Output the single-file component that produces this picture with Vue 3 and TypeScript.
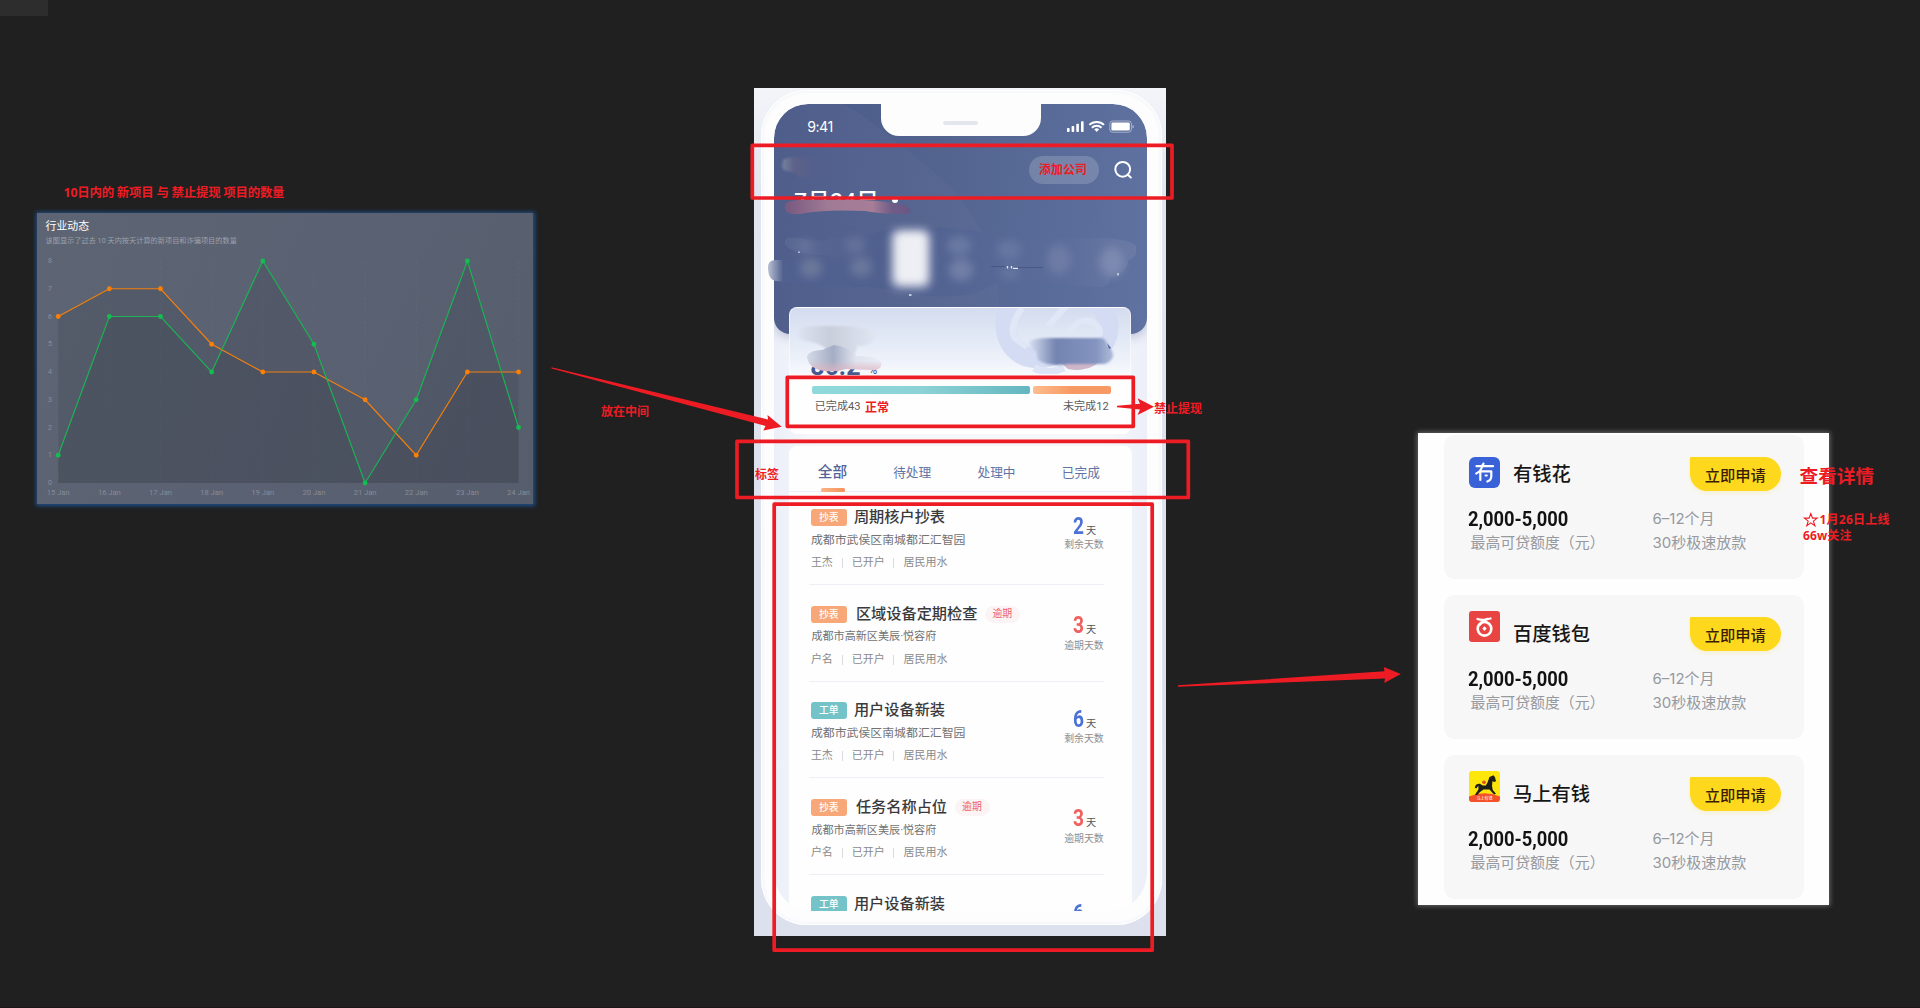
<script setup lang="ts">
interface Task {
  tag: string
  kind: 'read' | 'order'
  title: string
  overdue: boolean
  address: string
  owner: string
  days: number
}

interface Loan {
  name: string
  logo: 'flower' | 'wallet' | 'horse'
}

interface Note {
  text: string
  x: number
  y: number
  size: number
  width: number
}

const days = ['15', '16', '17', '18', '19', '20', '21', '22', '23', '24']
const orange = [6, 7, 7, 5, 4, 4, 3, 1, 4, 4]
const green = [1, 6, 6, 4, 8, 5, 0, 3, 8, 2]
const px = (i: number) => 21.2 + i * 51.15
const py = (v: number) => 270 - v * 27.75
const points = (s: number[]) => s.map((v, i) => `${px(i)},${py(v)}`).join(' ')
const area = (s: number[]) => `${px(0)},${py(0)} ${points(s)} ${px(9)},${py(0)}`

const tabs = ['全部', '待处理', '处理中', '已完成']

const tasks: Task[] = [
  { tag: '抄表', kind: 'read', title: '周期核户抄表', overdue: false, address: '成都市武侯区南城都汇汇智园', owner: '王杰', days: 2 },
  { tag: '抄表', kind: 'read', title: '区域设备定期检查', overdue: true, address: '成都市高新区美辰·悦容府', owner: '户名', days: 3 },
  { tag: '工单', kind: 'order', title: '用户设备新装', overdue: false, address: '成都市武侯区南城都汇汇智园', owner: '王杰', days: 6 },
  { tag: '抄表', kind: 'read', title: '任务名称占位', overdue: true, address: '成都市高新区美辰·悦容府', owner: '户名', days: 3 },
  { tag: '工单', kind: 'order', title: '用户设备新装', overdue: false, address: '成都市武侯区南城都汇汇智园', owner: '王杰', days: 6 },
]

const loans: Loan[] = [
  { name: '有钱花', logo: 'flower' },
  { name: '百度钱包', logo: 'wallet' },
  { name: '马上有钱', logo: 'horse' },
]

const notes: Note[] = [
  { text: '10日内的 新项目 与 禁止提现 项目的数量', x: 63.5, y: 197.3, size: 12.4, width: 221 },
  { text: '放在中间', x: 601, y: 415.6, size: 12, width: 48 },
  { text: '添加公司', x: 1039, y: 173.6, size: 12, width: 48 },
  { text: '正常', x: 865, y: 411.7, size: 12, width: 24 },
  { text: '禁止提现', x: 1154, y: 412.6, size: 12, width: 48 },
  { text: '标签', x: 755, y: 478.6, size: 12, width: 24 },
  { text: '查看详情', x: 1799.5, y: 483.4, size: 18.6, width: 74.5 },
  { text: '1月26日上线', x: 1819.5, y: 524.2, size: 12, width: 70 },
  { text: '66w关注', x: 1803, y: 540, size: 12, width: 48.5 },
]
</script>

<template>
  <main class="board">
    <div class="stub"></div>

    <section class="chart">
      <h2>行业动态</h2>
      <p>该图显示了过去 10 天内按天计算的新项目和诈骗项目的数量</p>
      <svg class="plot" viewBox="0 0 496 291">
        <line v-for="(d, i) in days" :key="d" :x1="px(i)" y1="48" :x2="px(i)" y2="270" class="grid" />
        <polygon :points="area(orange)" class="area" />
        <polygon :points="area(green)" class="area" />
        <text v-for="v in 9" :key="v" x="13" :y="py(v - 1) + 2" class="tick">{{ v - 1 }}</text>
        <text v-for="(d, i) in days" :key="'x' + d" :x="px(i)" y="281.5" class="tick">{{ d }} Jan</text>
        <polyline :points="points(orange)" class="line" stroke="#f57f0c" />
        <polyline :points="points(green)" class="line" stroke="#1bb354" />
        <circle v-for="(v, i) in orange" :key="'o' + i" :cx="px(i)" :cy="py(v)" r="2.4" fill="#fb8005" />
        <circle v-for="(v, i) in green" :key="'g' + i" :cx="px(i)" :cy="py(v)" r="2.4" fill="#14bd50" />
      </svg>
    </section>

    <section class="mock">
      <div class="device">
        <div class="screen">
          <header class="top">
            <i class="sweep"></i>
            <div class="status">
              <span>9:41</span>
              <svg viewBox="0 0 68 13" width="68" height="13">
                <g fill="#fff">
                  <rect x="1" y="8" width="2.6" height="4" rx=".7" />
                  <rect x="5.6" y="6" width="2.6" height="6" rx=".7" />
                  <rect x="10.3" y="3.8" width="2.6" height="8.2" rx=".7" />
                  <rect x="15" y="1.2" width="2.6" height="10.8" rx=".7" />
                  <rect x="45.4" y="2.6" width="18.4" height="8" rx="1.4" />
                  <path d="M28.3 9.2a3.7 3.7 0 0 1 4.8 0l-2.4 2.8z" />
                </g>
                <g fill="none" stroke="#fff" stroke-width="2">
                  <path d="M23.4 4.9a10.4 10.4 0 0 1 14.6 0M25.9 7.700a6.9 6.9 0 0 1 9.6 0" />
                </g>
                <rect x="43.8" y="1" width="21.6" height="11.2" rx="2.8" fill="none" stroke="#fff" stroke-opacity=".45" />
                <path d="M66.5 5v3.4q1.4-.4 1.4-1.7t-1.4-1.7z" fill="#fff" fill-opacity=".5" />
              </svg>
            </div>
            <div class="toolbar">
              <div class="pill"></div>
              <svg viewBox="0 0 20 20" width="20" height="20">
                <circle cx="9.7" cy="9.3" r="7.4" fill="none" stroke="#fff" stroke-width="2" />
                <path d="M14.6 14.6l3.2 3" stroke="#fff" stroke-width="2" stroke-linecap="round" />
              </svg>
            </div>
            <div class="date">7月24日</div>
            <i class="dot"></i>
          </header>
          <div class="notch"><i></i></div>

          <article class="rate">
            <svg class="mark" viewBox="0 0 140 66" width="140" height="66">
              <g fill="none" stroke-linecap="butt">
                <path d="M26 -8a30 33 0 0 0 18 58q20 2 36-14" stroke="#d3dcf3" stroke-width="20" />
                <path d="M108 42a30 30 0 1 0-40-46" stroke="#d3dcf3" stroke-width="20" />
                <path d="M32 0Q18 20 25 30l12 9M58 18L76-2M78 24q16-18 27-8t-4 20l-18 16" stroke="#e0e7f7" stroke-width="6.500" />
                <path d="M44 60q14 7 30 0" stroke="#dce4f5" stroke-width="7" />
              </g>
            </svg>
            <div class="percent"><span>86.2</span><small>%</small></div>
            <div class="bars"><i class="done"></i><i class="todo"></i></div>
            <div class="counts"><span>已完成43</span><span>未完成12</span></div>
          </article>

          <article class="list">
            <nav>
              <span v-for="(t, i) in tabs" :key="t" :class="{ on: i === 0 }">{{ t }}</span>
            </nav>
            <div v-for="(t, i) in tasks" :key="i" class="task" :class="{ late: t.overdue }">
              <div class="info">
                <div class="head">
                  <b :class="t.kind">{{ t.tag }}</b>
                  <strong>{{ t.title }}</strong>
                  <em v-if="t.overdue">逾期</em>
                </div>
                <div class="addr">{{ t.address }}</div>
                <div class="meta"><span>{{ t.owner }}</span><span>已开户</span><span>居民用水</span></div>
              </div>
              <div class="left">
                <div><b>{{ t.days }}</b><span>天</span></div>
                <small>{{ t.overdue ? '逾期天数' : '剩余天数' }}</small>
              </div>
            </div>
          </article>
        </div>
      </div>

      <svg class="smears" viewBox="754 88 412 848">
        <defs>
          <filter id="soft" x="-60%" y="-60%" width="220%" height="220%"><feGaussianBlur stdDeviation="4.5" /></filter>
          <filter id="slight" x="-20%" y="-20%" width="140%" height="140%"><feGaussianBlur stdDeviation=".8" /></filter>
          <linearGradient id="edge" x1="0" x2="1"><stop offset="0" stop-color="#b9c0d2" /><stop offset=".14" stop-color="#50608f" /><stop offset="1" stop-color="#50608f" /></linearGradient>
          <linearGradient id="band" x1="0" x2="1"><stop offset="0" stop-color="#596892" /><stop offset=".3" stop-color="#4f5f8e" /><stop offset=".8" stop-color="#5c6d9b" /><stop offset="1" stop-color="#6a7aa5" /></linearGradient>
          <linearGradient id="rose" x1="0" x2="1"><stop offset="0" stop-color="#77587f" /><stop offset=".35" stop-color="#a07b96" /><stop offset=".7" stop-color="#a77d97" /><stop offset=".85" stop-color="#6f5d88" /><stop offset="1" stop-color="#6a5683" /></linearGradient>
          <linearGradient id="haze" x1="0" x2="1"><stop offset="0" stop-color="#76819f" /><stop offset=".3" stop-color="#5d6288" /><stop offset="1" stop-color="#535f8e" stop-opacity=".3" /></linearGradient>
          <linearGradient id="blue" x1="0" x2="1"><stop offset="0" stop-color="#d8e0f2" /><stop offset=".32" stop-color="#7484b1" /><stop offset=".8" stop-color="#8494bf" /><stop offset="1" stop-color="#b0bdda" /></linearGradient>
          <linearGradient id="ash" x1="0" x2="1"><stop offset="0" stop-color="#dce3f1" /><stop offset=".4" stop-color="#c9cedb" /><stop offset="1" stop-color="#e0e6f3" /></linearGradient>
          <linearGradient id="ink" x1="0" x2="1"><stop offset="0" stop-color="#d5dae6" /><stop offset=".35" stop-color="#a4adc5" /><stop offset=".65" stop-color="#dfe3ee" /><stop offset="1" stop-color="#e9edf7" /></linearGradient>
          <linearGradient id="blush" x1="0" y1="0" x2="0" y2="1"><stop offset=".6" stop-color="#e2b4c0" stop-opacity="0" /><stop offset="1" stop-color="#dfb4c1" stop-opacity=".8" /></linearGradient>
        </defs>
        <path d="M783 160q4-4 34-3l6 20-24 1-5-6q-12 0-12-6z" fill="url(#haze)" filter="url(#slight)" />
        <path d="M785 204q5-5 30-4 50-2 78 3 16 2 17 7 0 5-10 4-20 0-35-3-42-2-65 3-14 1-15-5z" fill="url(#rose)" />
        <path d="M785 240q4-4 20-1 14 4 28-1l28-1 30-9q45-3 86 3l20 8h40l70-1q24 2 29 8 2 12-8 14 0 12-18 18 0 8-9 9l-100-6-25 12q-40 9-96-5l-70-8 36-23-40-3q-18-4-21-10z" fill="url(#band)" />
        <path d="M768 267q0-7 8-7l90 1 10-2-12 28-46-1-1-1-41-4q-8-1-8-14z" fill="url(#edge)" />
        <g filter="url(#soft)">
          <ellipse cx="811" cy="268" rx="11" ry="10" fill="#73809f" opacity=".75" />
          <ellipse cx="861" cy="267" rx="11" ry="10" fill="#73809f" opacity=".7" />
          <ellipse cx="805" cy="246" rx="9" ry="7" fill="#6f7da4" opacity=".55" />
          <ellipse cx="855" cy="245" rx="10" ry="8" fill="#6f7da4" opacity=".6" />
          <rect x="890" y="229" width="41" height="60" rx="8" fill="#c3c8d9" opacity=".6" />
          <rect x="894" y="231" width="34" height="54" rx="8" fill="#eeeff5" />
          <ellipse cx="959" cy="246" rx="12" ry="10" fill="#7281a8" opacity=".7" />
          <ellipse cx="961" cy="270" rx="12" ry="11" fill="#7886ab" opacity=".8" />
          <ellipse cx="1009" cy="250" rx="12" ry="10" fill="#7281a8" opacity=".6" />
          <ellipse cx="1010" cy="273" rx="10" ry="7" fill="#7281a8" opacity=".5" />
          <ellipse cx="1059" cy="260" rx="12" ry="15" fill="#7886ab" opacity=".6" />
          <ellipse cx="1112" cy="262" rx="12" ry="15" fill="#8491b5" opacity=".75" />
        </g>
        <path d="M991 266.500h14M1014 267.500h29" stroke="#465886" stroke-width="1" />
        <path d="M1007.500 266v2.500M1011.500 266v2.500M1013 268.300h5M1118 273v2.500M799 251.500v1.500M909 295h2.500" stroke="#e7eaf2" stroke-width="1.300" />
        <path d="M799 330q4-5 18-4h36q3 2 14 2 9 2 8 10-2 8-18 8l-3 12h-18q-8-5-12-11-10-6-20-6-8-3-5-11z" fill="url(#ash)" filter="url(#slight)" />
        <path d="M807 356q3-6 15-6l12-5q16 2 22 11 20-1 25 6 2 5-5 8l-30-1q-14 4-26 1-13-4-13-14z" fill="url(#ink)" />
        <path d="M807 356q3-6 15-6l12-5q16 2 22 11 20-1 25 6 2 5-5 8l-30-1q-14 4-26 1-13-4-13-14z" fill="url(#blush)" />
        <path d="M1060 362l8 7q10 2 16 0 8-1 15-7z" fill="#ceb5c8" />
        <path d="M1029 341q6-3 20-3h53q5 2 5 7 7 6 6 12-3 6-9 7h-36q-20 3-30-4l-2-9q-8-3-7-10z" fill="url(#blue)" filter="url(#slight)" />
        <path d="M1107 343l4 5-2 1z" fill="#5066a3" />
      </svg>
    </section>

    <section class="loans">
      <article v-for="l in loans" :key="l.name" class="loan">
        <div class="brand" :class="l.logo">
          <svg v-if="l.logo === 'flower'" viewBox="0 0 31 31" width="31" height="31">
            <rect width="31" height="31" rx="6" fill="#3a62d8" />
            <path d="M7.500 9.200h16.500M12.500 9.200q1.700-1 2-2.700M13.300 9.500q-1.800 5-6 7M11.300 14.500v8.500M11.300 14.300h11v5q0 4-4 5.200M16.600 18.500h1.200" fill="none" stroke="#fff" stroke-width="2.200" stroke-linejoin="round" stroke-linecap="round" />
          </svg>
          <svg v-else-if="l.logo === 'wallet'" viewBox="0 0 31 31" width="31" height="31">
            <rect width="31" height="31" rx="3" fill="#e84442" />
            <path d="M8.500 8q5 2 13-.500M11.200 13.500q2.500-4.500 7.500-5.500" fill="none" stroke="#fff" stroke-width="2.300" stroke-linecap="round" />
            <circle cx="15.500" cy="17.800" r="6.800" fill="none" stroke="#fff" stroke-width="2.600" />
            <path d="M15.500 15.200l2.200 2.400-2.200 2.400-2.200-2.400z" fill="#fff" />
          </svg>
          <svg v-else viewBox="0 0 31 31" width="31" height="31">
            <rect width="31" height="31" rx="3" fill="#ffe60a" />
            <path d="M0 25.500Q15.500 19 31 25.500V28q0 3-3 3H3q-3 0-3-3z" fill="#f6502b" />
            <path d="M18.500 11.500l2-5.500 4-1.700 1.500 2 1 4-2 .8-1.500-1-.5 5 .8 4 3.200 3.700-2 .6-4.500-4.800h-6l-3.500 2.500-3 3.200-2-.6 3.500-5.500-.2-3.500-1.800 2.600-1.700-.3q.3-4.500 5-4.300l3 1.800h3z" fill="#1d1d1b" />
            <circle cx="15" cy="11.300" r="1.800" fill="#e8432d" />
            <text x="15.500" y="28.700" class="tiny">马上有钱</text>
          </svg>
          <h3>{{ l.name }}</h3>
          <button>立即申请</button>
        </div>
        <div class="row amount"><strong>2,000-5,000</strong><span>6–12个月</span></div>
        <div class="row"><span class="cap">最高可贷额度（元）</span><span>30秒极速放款</span></div>
      </article>
    </section>

    <svg class="notes" viewBox="0 0 1920 1008">
      <g fill="none" stroke="#ed1c24" stroke-width="3.700" stroke-linejoin="round">
        <rect x="752.300" y="145.300" width="419.700" height="52.700" />
        <rect x="787.300" y="377.300" width="346" height="49" />
        <rect x="737" y="441.300" width="451.300" height="56.200" />
        <rect x="774.200" y="504.200" width="378" height="446" />
      </g>
      <g fill="#ed1c24">
        <path d="M551.500 367.300L768 419.500 767.500 415 781.700 426.700 763.300 430.500 765.500 426 551.500 368.500z" />
        <path d="M1178 685.300L1384.500 671.300 1383.700 667 1400.800 674 1384.300 683 1385 678.500 1178 686.700z" />
        <path d="M1117 405.700L1140 403.700 1137.500 398.300 1154 406.700 1137.500 415 1140 409.500 1117 407.200z" />
      </g>
      <path d="M1810.800 513.500l1.700 4.600h4.700l-3.800 3 1.500 4.700-4.100-2.900-4.100 2.900 1.500-4.700-3.800-3h4.700z" fill="none" stroke="#ed1c24" stroke-width="1.100" />
      <text v-for="n in notes" :key="n.text" :x="n.x" :y="n.y" :font-size="n.size" :textLength="n.width">{{ n.text }}</text>
    </svg>
  </main>
</template>

<style>
body {
  background: #202020;
  overflow: hidden;
}
</style>

<style scoped>
.board {
  position: relative;
  width: 1920px;
  height: 1008px;
  overflow: hidden;
  box-sizing: border-box;
  border-bottom: 1px solid #1c161c;
  background: #202020;
  font-family: Roboto, "Noto Sans CJK SC", sans-serif;
}
h2, h3, p { margin: 0; }
i, em { font-style: normal; }
.stub { width: 48px; height: 16px; background: #2d2d2d; }

.chart {
  position: absolute;
  left: 37px;
  top: 213px;
  width: 496px;
  height: 291px;
  box-sizing: border-box;
  padding: 8px 8.500px;
  background: linear-gradient(115deg, #5d6473, #5a6172 55%, #565d6c);
  box-shadow: 0 0 4px 1.500px #1f4f8a;
}
.chart h2 { font-size: 10.900px; line-height: 12px; font-weight: 400; color: #fff; }
.chart p { margin-top: 3px; font-size: 7.200px; line-height: 10px; color: #9ca1ab; white-space: nowrap; }
.plot { position: absolute; left: 0; top: 0; width: 496px; height: 291px; }
.grid { stroke: #6a7180; stroke-width: .7; stroke-dasharray: 3 3; opacity: .45; }
.area { fill: #30333e; fill-opacity: .19; }
.tick { font-size: 7.600px; fill: #868c99; text-anchor: middle; }
.line { fill: none; stroke-width: 1.200; }

.mock {
  position: absolute;
  left: 754px;
  top: 88px;
  width: 412px;
  height: 848px;
  box-sizing: border-box;
  padding: 2px 4.500px 0 6.700px;
  background: linear-gradient(180deg, #f3f5f9 0, #e1e5ef 12%, #dbe0ec 60%, #dde1ed 100%);
  overflow: hidden;
}
.device {
  height: 835.300px;
  box-sizing: border-box;
  padding: 14px 14.500px 14px 13.500px;
  border-radius: 46px;
  background: #fdfdfe;
  box-shadow: inset 0 0 0 1px #fff, inset 0 0 4px 1px #eef0f6;
}
.screen {
  position: relative;
  height: 807px;
  overflow: hidden;
  border-radius: 34px 34px 38px 38px;
  background: linear-gradient(90deg, #eceff8, #f6f7fb 10%, #f6f7fb 90%, #eceff8);
}
.top {
  position: relative;
  height: 230px;
  margin-right: .500px;
  overflow: hidden;
  border-radius: 34px 34px 16px 16px;
  background: linear-gradient(95deg, #4b5a89, #53648f 45%, #5f72a1);
  box-shadow: 0 4px 10px rgba(110, 120, 160, .35);
}
.sweep {
  position: absolute;
  left: -160px;
  top: 10px;
  width: 390px;
  height: 300px;
  border-radius: 40% 42% 50% 50%;
  background: rgba(255, 255, 255, .025);
  transform: rotate(38deg);
}
.status {
  display: flex;
  justify-content: space-between;
  align-items: center;
  height: 46px;
  padding: 0 13px 0 33px;
  color: #fff;
  font: 14.200px Inter, sans-serif;
  letter-spacing: -.5px;
}
.status span { margin-top: -1px; }
.status svg { margin-top: -2px; }
.toolbar {
  display: flex;
  justify-content: flex-end;
  align-items: center;
  gap: 14px;
  height: 28px;
  margin-top: 6px;
  padding-right: 13.500px;
}
.pill { width: 70px; height: 28px; border-radius: 14px; background: rgba(255, 255, 255, .17); }
.date { margin: 3px 0 0 20px; height: 13px; overflow: hidden; color: #fff; font-size: 22.500px; line-height: 28px; letter-spacing: .3px; font-weight: 500; }
.dot { display: block; width: 6px; height: 6px; margin: -3px 0 0 118px; border-radius: 3px; background: #fff; }
.notch {
  position: absolute;
  left: 106.500px;
  top: -1px;
  width: 160px;
  height: 32.500px;
  border-radius: 0 0 18px 18px;
  background: #fdfdfe;
}
.notch i { display: block; width: 35px; height: 4px; margin: 18px auto 0; border-radius: 2px; background: #e4e6ed; }

.rate {
  position: relative;
  width: 342px;
  height: 127px;
  margin: -27px 0 0 15px;
  box-sizing: border-box;
  border: 1px solid rgba(255, 255, 255, .55);
  border-bottom: 0;
  border-radius: 8px;
  overflow: hidden;
  background: linear-gradient(180deg, #d3dcef, #eef2fa 42%, #fefefe 60%);
}
.mark { position: absolute; left: 200px; top: 0; }
.percent { display: flex; align-items: flex-end; gap: 8px; margin: 47px 0 0 20px; height: 26px; color: #45598f; font-size: 25px; line-height: 28px; font-weight: 700; }
.percent small { font-size: 12px; line-height: 21px; font-weight: 400; }
.bars { display: flex; gap: 3px; margin: 5px 19px 0 22px; }
.bars i { height: 8px; border-radius: 2px; }
.done { width: 218px; background: linear-gradient(90deg, #8fd9db, #8cd2d6 50%, #64b6c0); }
.todo { flex: 1; background: linear-gradient(90deg, #fdbd8e, #f79963 50%); }
.counts { display: flex; justify-content: space-between; padding: 0 21.500px 0 24.500px; margin-top: 4.500px; line-height: 15px; font-size: 11.100px; color: #5c5c5c; }

.list {
  width: 343px;
  height: 470px;
  margin: 12.300px 0 0 15px;
  box-sizing: border-box;
  border-radius: 8px 8px 0 0;
  background: #fefefe;
}
nav {
  display: flex;
  height: 45.500px;
  padding-left: 28.500px;
  box-sizing: border-box;
  border-bottom: 1px solid #eceef3;
  font-size: 12.700px;
  line-height: 53px;
  color: #6173a4;
}
nav span { flex: none; width: 84.300px; }
nav span:last-child { width: 40px; }
nav .on { position: relative; width: 75.500px; font-size: 14.700px; font-weight: 500; line-height: 52.500px; color: #51639a; }
nav .on::after {
  content: "";
  position: absolute;
  left: 3px;
  bottom: -1px;
  width: 24px;
  height: 4px;
  border-radius: 1.500px;
  background: linear-gradient(90deg, #fbb384, #f5935c);
}
.task {
  display: flex;
  justify-content: space-between;
  width: 295px;
  height: 76px;
  margin: 0 0 20.800px 19.500px;
  box-sizing: border-box;
  border-bottom: 1px solid #eceff7;
}
nav + .task { margin-top: 17px; }
.info { padding-left: 2.200px; }
.head { display: flex; align-items: center; height: 17px; }
.head b { width: 36px; height: 17px; border-radius: 3px; color: #fff; font-size: 9.900px; line-height: 17px; font-weight: 500; text-align: center; }
.head .read { background: #f7a778; }
.head .order { background: #74c3c9; }
.head strong { margin-left: 7px; font-size: 15.200px; line-height: 17px; font-weight: 500; color: #3a3a3c; white-space: nowrap; }
.late .head strong { margin-left: 9px; }
.head em { margin-left: 7.500px; width: 35px; height: 17px; border-radius: 9px; background: #fbf3f4; color: #ec6264; font-size: 9.900px; line-height: 16.500px; text-align: center; }
.addr { margin-top: 7px; font-size: 11.900px; line-height: 15px; color: #727274; white-space: nowrap; }
.late .addr { padding-left: .500px; margin-top: 6.500px; margin-bottom: 7.500px; font-size: 11.100px; }
.meta { display: flex; margin-top: 7px; font-size: 11px; line-height: 15px; color: #8a8a8c; }
.meta span + span { position: relative; margin-left: 18.800px; }
.meta span + span::before { content: ""; position: absolute; left: -10px; top: 3px; height: 10px; border-left: 1px solid #dcdce0; }
.left { width: 40px; padding-top: 6px; text-align: right; }
.late .left { padding-top: 8px; }
.left div { display: flex; align-items: baseline; justify-content: flex-end; gap: 1.500px; height: 22px; padding-right: 7.500px; line-height: 22px; }
.left b { font: 700 24.500px/22px Roboto, sans-serif; color: #4c72d6; transform: scaleX(.780); transform-origin: right; }
.late .left b { color: #f0605f; }
.left span { font-size: 10.200px; color: #555; }
.left small { display: block; margin-top: .500px; font-size: 9.900px; line-height: 15px; color: #8e8e90; white-space: nowrap; }
.late .left small { margin-top: 2px; }
.smears { position: absolute; left: 0; top: 0; width: 412px; height: 848px; }

.loans {
  position: absolute;
  left: 1418px;
  top: 433px;
  width: 411px;
  height: 472px;
  box-sizing: border-box;
  padding: 1.700px 25.500px 0 26px;
  background: #fefefe;
  box-shadow: 0 0 5px 1px rgba(255, 255, 255, .32);
}
.loan {
  height: 144px;
  margin-bottom: 16px;
  box-sizing: border-box;
  padding: 22.500px 22.500px 0 24.500px;
  border-radius: 11px;
  background: #f7f7f7;
}
.brand { display: flex; height: 34px; }
.brand svg { flex: none; margin-top: -6px; }
.brand .tiny { font-size: 4px; fill: #fff; text-anchor: middle; }
.brand.flower svg { margin-top: 0; }
.brand h3 { flex: 1; margin-left: 13.500px; font-size: 19.300px; line-height: 36px; font-weight: 500; color: #161616; }
.brand button {
  width: 91.500px;
  height: 34px;
  padding: 0;
  border: 0;
  border-radius: 1px 17px 17px 17px;
  background: #fdd81c;
  box-shadow: 0 2px 4px rgba(253, 216, 28, .2);
  color: #3b1f08;
  font: 500 15.300px/33px "Noto Sans CJK SC", sans-serif;
}
.row { display: flex; height: 24px; font-size: 15px; line-height: 24px; color: #9699a0; font-family: Inter, "Noto Sans CJK SC", sans-serif; white-space: nowrap; }
.row > :first-child { flex: none; width: 184px; }
.row .cap { text-indent: 2px; font-size: 14.900px; }
.amount { margin-top: 15.500px; }
.amount + .row { margin-top: .500px; }
.row strong { font: 700 19.500px/25px Roboto, sans-serif; color: #121212; transform: scaleX(.940); transform-origin: left; margin-left: -.500px; margin-right: .500px; }

.notes { position: absolute; left: 0; top: 0; width: 1920px; height: 1008px; pointer-events: none; }
.notes text { fill: #ed1c24; font-weight: 700; font-family: "Open Sans", "Noto Sans CJK SC", sans-serif; }
</style>
